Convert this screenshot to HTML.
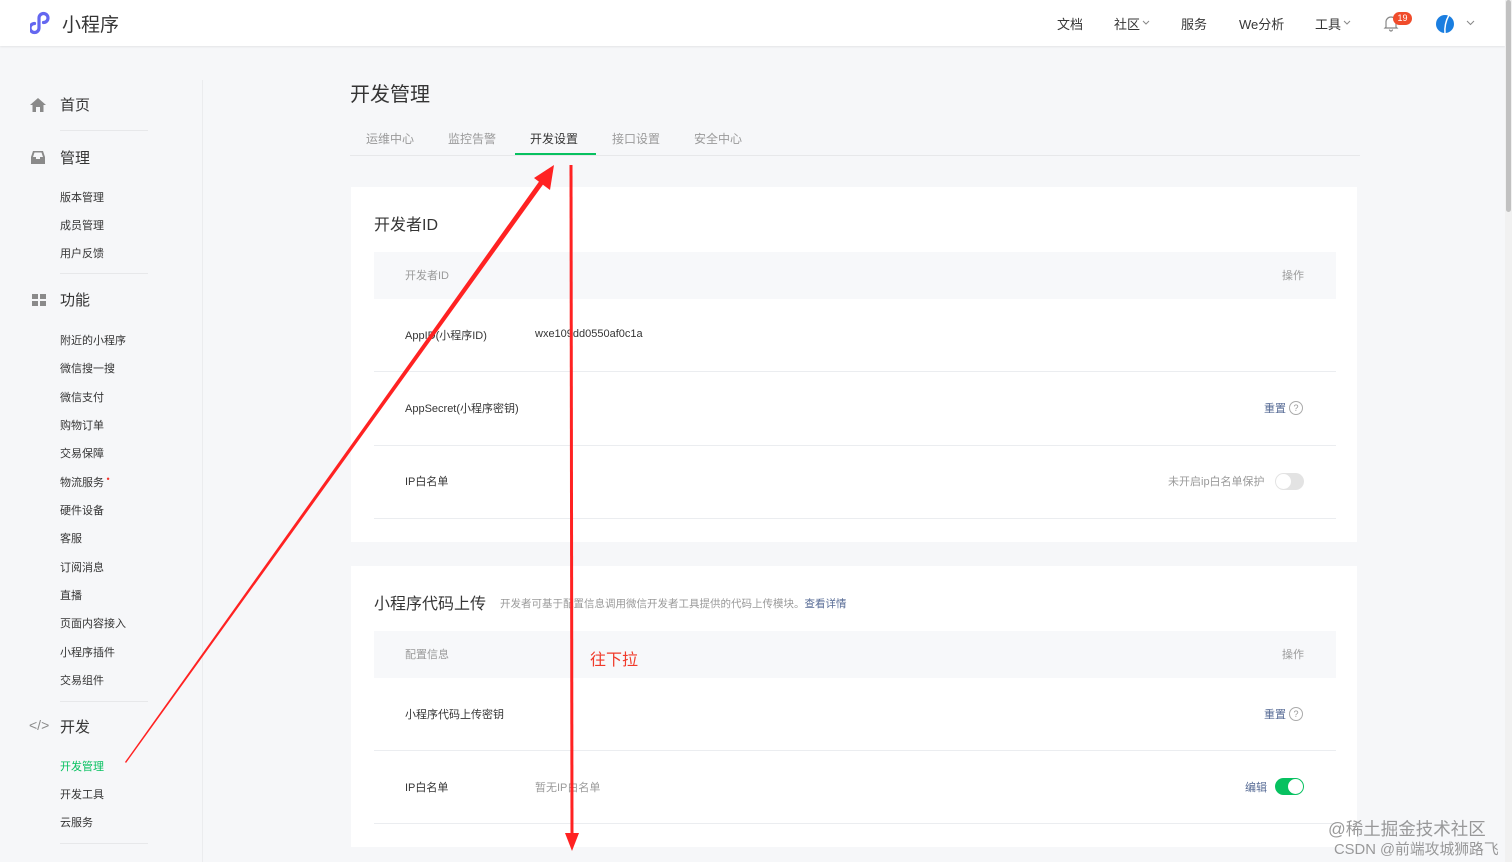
<!DOCTYPE html>
<html><head><meta charset="utf-8">
<style>
*{margin:0;padding:0;box-sizing:border-box}
body{width:1512px;height:862px;overflow:hidden;background:#f6f7f9;font-family:"Liberation Sans","Noto Sans CJK SC",sans-serif;color:#353535;position:relative}
.a{position:absolute;white-space:nowrap}
.hdr{position:absolute;left:0;top:0;width:1505px;height:46px;background:#fff;box-shadow:0 1px 2px rgba(0,0,0,.08)}
.nav{font-size:13px;color:#353535;top:14px}
.side1{font-size:15px;color:#353535}
.side2{font-size:11px;color:#353535}
.hl{position:absolute;height:1px;background:#e7e8ea;left:60px;width:88px}
.tab{font-size:12px;color:#9a9a9a;top:130px}
.card{position:absolute;background:#fff;left:351px;width:1006px}
.th{position:absolute;left:374px;width:962px;background:#f7f8fa;height:47px}
.sm{font-size:11px;color:#353535}
.gr{font-size:11px;color:#9a9a9a}
.div{position:absolute;left:374px;width:962px;height:1px;background:#ebedf0}
.lnk{font-size:11px;color:#576b95}
.q{position:absolute;width:14px;height:14px;border:1px solid #aaa;border-radius:50%;font-size:9px;color:#999;text-align:center;line-height:12px}
</style></head><body>
<div class="hdr"></div>
<svg class="a" style="left:30px;top:11px" width="26" height="24" viewBox="0 0 26 24"><path d="M9 10 V17 A4.5 4.5 0 1 1 4.5 12.5 M9 14 V7 A4.5 4.5 0 1 1 13.5 11.5" fill="none" stroke="#6467f0" stroke-width="3.2" stroke-linecap="round"/></svg>
<div class="a" style="left:62px;top:10px;font-size:19px;color:#353535">小程序</div>
<div class="a nav" style="left:1057px">文档</div>
<div class="a nav" style="left:1114px">社区</div>
<svg class="a" style="left:1142px;top:20px" width="8" height="6"><path d="M1 1 L4 4 L7 1" fill="none" stroke="#888" stroke-width="1"/></svg>
<div class="a nav" style="left:1181px">服务</div>
<div class="a nav" style="left:1239px">We分析</div>
<div class="a nav" style="left:1315px">工具</div>
<svg class="a" style="left:1343px;top:20px" width="8" height="6"><path d="M1 1 L4 4 L7 1" fill="none" stroke="#888" stroke-width="1"/></svg>
<svg class="a" style="left:1383px;top:15px" width="16" height="17" viewBox="0 0 16 17"><path d="M3 12 V7 a5 5 0 0 1 10 0 V12 L14 13 H2 Z M6.5 14.5 a1.5 1.5 0 0 0 3 0" fill="none" stroke="#888" stroke-width="1.2"/></svg>
<div class="a" style="left:1393px;top:12px;width:19px;height:13px;background:#f04c2b;border-radius:7px;color:#fff;font-size:9px;text-align:center;line-height:13px">19</div>
<div class="a" style="left:1436px;top:15px;width:18px;height:18px;border-radius:50%;background:#1a7ee0"></div>
<svg class="a" style="left:1436px;top:12px" width="20" height="24"><path d="M13 3 Q8 12 9 22" stroke="#fff" stroke-width="1.5" fill="none"/></svg>
<svg class="a" style="left:1466px;top:20px" width="9" height="6"><path d="M1 1 L4.5 4.5 L8 1" fill="none" stroke="#888" stroke-width="1"/></svg>
<div class="a" style="left:1505px;top:0;width:7px;height:862px;background:#f1f1f1"></div>
<div class="a" style="left:1506px;top:0;width:5px;height:212px;background:#c1c1c1;border-radius:3px"></div>

<div class="a" style="left:202px;top:80px;width:1px;height:782px;background:#ebecee"></div>
<svg class="a" style="left:30px;top:97px" width="16" height="16" viewBox="0 0 16 16"><path d="M8 1 L16 8 H13.5 V15 H10 V10 H6 V15 H2.5 V8 H0 Z" fill="#8a8a8a"/></svg>
<div class="a side1" style="left:60px;top:94px">首页</div>
<div class="hl" style="top:130px"></div>
<svg class="a" style="left:30px;top:150px" width="16" height="15" viewBox="0 0 16 15"><path d="M1 7 L3 1 H13 L15 7 V14 H1 Z" fill="#8a8a8a"/><path d="M3 7 H6 V9 H10 V7 H13 L11.5 2.5 H4.5 Z" fill="#f6f7f9"/></svg>
<div class="a side1" style="left:60px;top:147px">管理</div>
<div class="a side2" style="left:60px;top:189px">版本管理</div>
<div class="a side2" style="left:60px;top:217px">成员管理</div>
<div class="a side2" style="left:60px;top:245px">用户反馈</div>
<div class="hl" style="top:273px"></div>
<svg class="a" style="left:32px;top:294px" width="14" height="13"><rect x="0" y="0" width="6" height="5" fill="#8a8a8a"/><rect x="8" y="0" width="6" height="5" fill="#8a8a8a"/><rect x="0" y="7" width="6" height="5" fill="#8a8a8a"/><rect x="8" y="7" width="6" height="5" fill="#8a8a8a"/></svg>
<div class="a side1" style="left:60px;top:289px">功能</div>
<div class="a side2" style="left:60px;top:332px">附近的小程序</div>
<div class="a side2" style="left:60px;top:360px">微信搜一搜</div>
<div class="a side2" style="left:60px;top:389px">微信支付</div>
<div class="a side2" style="left:60px;top:417px">购物订单</div>
<div class="a side2" style="left:60px;top:445px">交易保障</div>
<div class="a side2" style="left:60px;top:474px">物流服务<span style="color:#f43530;font-size:9px;vertical-align:top"> •</span></div>
<div class="a side2" style="left:60px;top:502px">硬件设备</div>
<div class="a side2" style="left:60px;top:530px">客服</div>
<div class="a side2" style="left:60px;top:559px">订阅消息</div>
<div class="a side2" style="left:60px;top:587px">直播</div>
<div class="a side2" style="left:60px;top:615px">页面内容接入</div>
<div class="a side2" style="left:60px;top:644px">小程序插件</div>
<div class="a side2" style="left:60px;top:672px">交易组件</div>
<div class="hl" style="top:701px"></div>
<div class="a" style="left:29px;top:717px;font-size:14px;color:#8a8a8a">&lt;/&gt;</div>
<div class="a side1" style="left:60px;top:716px">开发</div>
<div class="a side2" style="left:60px;top:758px;color:#07c160">开发管理</div>
<div class="a side2" style="left:60px;top:786px">开发工具</div>
<div class="a side2" style="left:60px;top:814px">云服务</div>
<div class="hl" style="top:843px"></div>

<div class="a" style="left:350px;top:78px;font-size:20px;color:#353535">开发管理</div>
<div class="a tab" style="left:366px">运维中心</div>
<div class="a tab" style="left:448px">监控告警</div>
<div class="a tab" style="left:530px;color:#353535">开发设置</div>
<div class="a tab" style="left:612px">接口设置</div>
<div class="a tab" style="left:694px">安全中心</div>
<div class="a" style="left:350px;top:155px;width:1010px;height:1px;background:#e7e8ea"></div>
<div class="a" style="left:515px;top:153px;width:81px;height:2px;background:#07c160"></div>

<div class="card" style="top:187px;height:355px"></div>
<div class="a" style="left:374px;top:211px;font-size:16px;color:#353535">开发者ID</div>
<div class="th" style="top:252px"></div>
<div class="a gr" style="left:405px;top:267px">开发者ID</div>
<div class="a gr" style="left:1282px;top:267px">操作</div>
<div class="a sm" style="left:405px;top:327px">AppID(小程序ID)</div>
<div class="a sm" style="left:535px;top:328px">wxe109dd0550af0c1a</div>
<div class="div" style="top:371px"></div>
<div class="a sm" style="left:405px;top:400px">AppSecret(小程序密钥)</div>
<div class="a lnk" style="left:1264px;top:400px">重置</div>
<div class="q" style="left:1289px;top:401px">?</div>
<div class="div" style="top:445px"></div>
<div class="a sm" style="left:405px;top:473px">IP白名单</div>
<div class="a gr" style="left:1168px;top:473px">未开启ip白名单保护</div>
<div class="a" style="left:1275px;top:473px;width:29px;height:17px;border-radius:9px;background:#e3e3e3"></div>
<div class="a" style="left:1276px;top:474px;width:15px;height:15px;border-radius:50%;background:#fff"></div>
<div class="div" style="top:518px"></div>

<div class="card" style="top:566px;height:281px"></div>
<div class="a" style="left:374px;top:590px;font-size:16px;color:#353535">小程序代码上传</div>
<div class="a gr" style="left:500px;top:596px;font-size:10.5px">开发者可基于配置信息调用微信开发者工具提供的代码上传模块。<span style="color:#576b95">查看详情</span></div>
<div class="th" style="top:631px"></div>
<div class="a gr" style="left:405px;top:646px">配置信息</div>
<div class="a gr" style="left:1282px;top:646px">操作</div>
<div class="a sm" style="left:405px;top:706px">小程序代码上传密钥</div>
<div class="a lnk" style="left:1264px;top:706px">重置</div>
<div class="q" style="left:1289px;top:707px">?</div>
<div class="div" style="top:750px"></div>
<div class="a sm" style="left:405px;top:779px">IP白名单</div>
<div class="a gr" style="left:535px;top:779px">暂无IP白名单</div>
<div class="a lnk" style="left:1245px;top:779px">编辑</div>
<div class="a" style="left:1275px;top:778px;width:29px;height:17px;border-radius:9px;background:#07c160"></div>
<div class="a" style="left:1288px;top:779px;width:15px;height:15px;border-radius:50%;background:#fff"></div>
<div class="div" style="top:823px"></div>

<div class="a" style="left:590px;top:646px;font-size:16px;color:#f03a2a">往下拉</div>
<svg class="a" style="left:0;top:0" width="1512" height="862">
<polygon points="125,762 543,176 547,179 126,763" fill="#f22"/>
<polygon points="554,165 550,190 534,178" fill="#f22"/>
<line x1="571" y1="165" x2="572" y2="838" stroke="#f22" stroke-width="3"/>
<polygon points="565,833 579,833 572,851" fill="#f22"/>
</svg>
<div class="a" style="left:1328px;top:816px;font-size:17.5px;color:rgba(120,120,120,.75)">@稀土掘金技术社区</div>
<div class="a" style="left:1334px;top:838px;font-size:14.8px;color:rgba(120,120,120,.75)">CSDN @前端攻城狮路飞</div>
</body></html>
